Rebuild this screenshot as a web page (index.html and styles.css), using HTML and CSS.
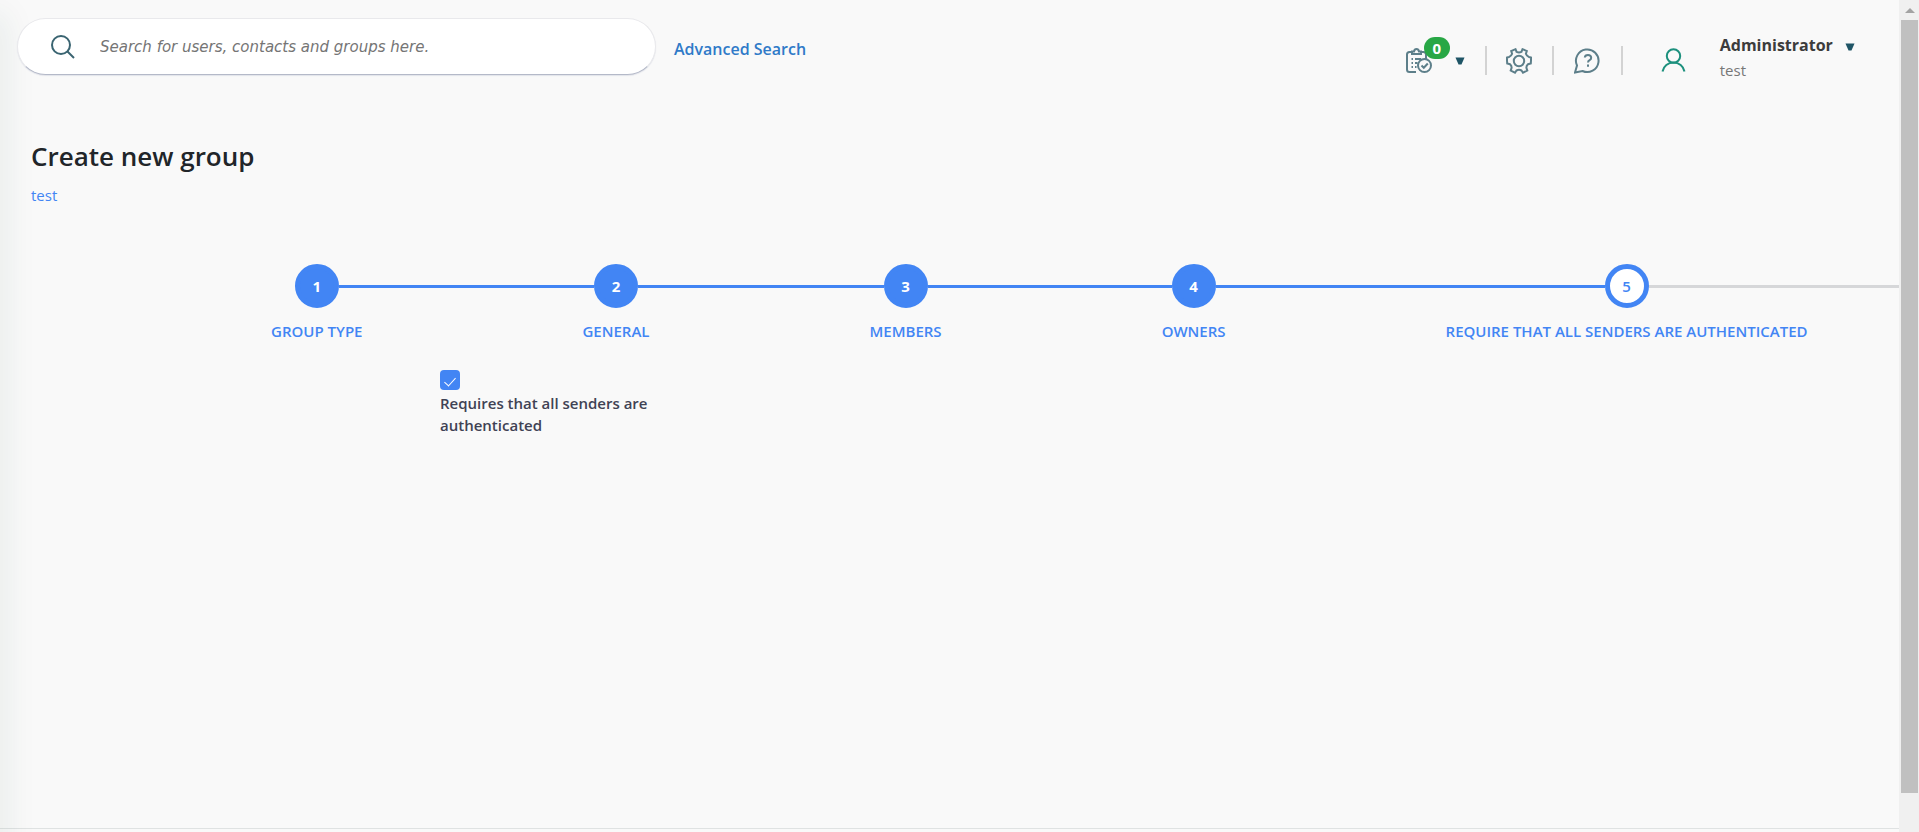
FILE: index.html
```html
<!DOCTYPE html>
<html lang="en">
<head>
<meta charset="utf-8">
<title>Create new group</title>
<link rel="stylesheet" href="styles.css">
</head>
<body>
<div class="app">
  <div class="page">
    <header class="topbar">
      <form class="search" role="search">
        <svg class="search-icon" viewBox="0 0 24 24" aria-hidden="true"><circle cx="10" cy="10" r="9"/><path d="M16.500 16.500L23 23"/></svg>
        <input class="search-input" type="search" aria-label="Search" placeholder="Search for users, contacts and groups here.">
      </form>
      <a class="advanced" href="#">Advanced Search</a>
      <div class="tools">
        <button class="tool tasks" type="button" aria-label="Tasks">
          <svg class="icon" viewBox="0 0 26 26" aria-hidden="true">
            <path d="M10 24H3.500Q1 24 1 21.500V6.500Q1 4 3.500 4H6V6H15V4H17.500Q20 4 20 6.500V11M6 5V3.500H8Q8.500 1 10.500 1T13 3.500H15V5"/>
            <path d="M5.500 11H7M9 11H15M5.500 15H7M9 15H11.500M5.500 19H7M9 19H10.500"/>
            <circle cx="18.500" cy="17.500" r="6.500"/><path d="M15.500 17.500L17.800 19.800L21.800 15.500"/>
          </svg>
          <span class="badge">0</span>
          <svg class="caret" viewBox="0 0 10 8" aria-hidden="true"><path d="M0.500 0.500H9.500L6.500 7.500H3.500Z"/></svg>
        </button>
        <button class="tool settings" type="button" aria-label="Settings">
          <svg class="icon" viewBox="0 0 26 26" aria-hidden="true">
            <path d="M9.500 1.200L10.600 3.900Q13 5 15.400 3.900L16.500 1.200L20.800 3L19.900 5.800Q20.600 8.200 23 9L25 9.500V12.500L24.800 15.500L22 16.200Q20.200 17.800 20.400 19.800L21.300 22.600L17 24.700L15.500 22.500Q13 21.200 10.500 22.500L9 24.700L4.700 22.600L5.600 19.800Q5.800 17.800 4 16.200L1.200 15.500L1 12.500V9.500L3 9Q5.400 8.200 6.100 5.800L5.200 3Z"/>
            <circle cx="13" cy="13" r="5.200"/>
          </svg>
        </button>
        <button class="tool help" type="button" aria-label="Help">
          <svg class="icon" viewBox="0 0 26 26" aria-hidden="true">
            <path d="M1 24.500L3 17.500A11.300 11.300 0 1 1 8.500 23Z"/>
            <path d="M10.800 9.500Q11 7 14 7T17.200 9.700Q17.200 11.300 15.600 12.100T14 14.500"/><path d="M14 16.500V18.800"/>
          </svg>
        </button>
      </div>
      <button class="account" type="button">
        <svg class="avatar" viewBox="0 0 24 24" aria-hidden="true"><circle cx="12" cy="8" r="6.700"/><path d="M1 23.500C2 18 6.500 14.500 12 14.500S22 18 23 23.500"/></svg>
        <span class="who">
          <span class="name">Administrator <svg class="caret" viewBox="0 0 10 8" aria-hidden="true"><path d="M0.500 0.500H9.500L6.500 7.500H3.500Z"/></svg></span>
          <span class="org">test</span>
        </span>
      </button>
    </header>
    <main class="content">
      <h1 class="title">Create new group</h1>
      <a class="crumb" href="#">test</a>
      <ol class="steps">
        <li class="step done"><span class="dot">1</span><span class="label">GROUP TYPE</span></li>
        <li class="step done"><span class="dot">2</span><span class="label">GENERAL</span></li>
        <li class="step done"><span class="dot">3</span><span class="label">MEMBERS</span></li>
        <li class="step done"><span class="dot">4</span><span class="label">OWNERS</span></li>
        <li class="step current"><span class="dot">5</span><span class="label">REQUIRE THAT ALL SENDERS ARE AUTHENTICATED</span></li>
      </ol>
      <div class="field">
        <input class="check" type="checkbox" id="auth" checked>
        <label class="field-label" for="auth">Requires that all senders are authenticated</label>
      </div>
    </main>
    <footer class="foot"></footer>
  </div>
  <div class="scroll" aria-hidden="true">
    <svg class="scroll-up" viewBox="0 0 10 5"><path d="M0 5L5 0L10 5Z"/></svg>
    <div class="thumb"></div>
  </div>
</div>
</body>
</html>
```

FILE: styles.css
```css
* { box-sizing: border-box; }
body {
  margin: 0;
  background: #f9f9f9;
  color: #212529;
  font: 15px/22px "Open Sans", "Noto Sans", sans-serif;
}
button { border: 0; padding: 0; background: none; font: inherit; color: inherit; cursor: pointer; }
a { text-decoration: none; }
.app { display: flex; min-height: 100vh; }
.page { position: relative; display: flex; flex-direction: column; flex: 1; min-width: 0; overflow: hidden; }
.page::before {
  content: "";
  position: absolute;
  top: 20px;
  bottom: -30px;
  left: -20px;
  width: 20px;
  box-shadow: 0 0 32px 6px rgba(30, 80, 60, 0.08);
}

.topbar { position: relative; display: flex; align-items: flex-start; padding: 18px 44px 0 17px; }
.search {
  display: flex;
  align-items: center;
  width: 639px;
  height: 57px;
  padding: 0 33px;
  border: 1px solid #e9e9ec;
  border-bottom-color: #b4b9c8;
  border-radius: 29px;
  background: #fff;
  box-shadow: 0 1px 1px #e2e4ea;
}
.search-icon { width: 24px; height: 24px; fill: none; stroke: #3a6471; stroke-width: 2; }
.search-input {
  flex: 1;
  margin-left: 25px;
  padding: 0;
  border: 0;
  outline: 0;
  background: none;
  font: italic 15px/20px Verdana, "DejaVu Sans", sans-serif;
}
.search-input::placeholder { color: #757575; opacity: 1; }
.advanced { margin: 20px auto 0 18px; color: #2f7ac8; font-size: 16px; font-weight: 600; }

.tools { display: flex; padding-top: 28px; }
.tool { position: relative; display: flex; align-items: center; height: 29px; border-right: 2px solid #d3d3d3; }
.icon { width: 26px; height: 26px; fill: none; stroke: #5d7f8a; stroke-width: 2; }
.tasks { padding-right: 20px; }
.tasks .caret { margin-left: 23px; }
.settings { padding: 0 20px 0 19px; }
.help { padding: 0 21px 0 20px; }
.badge {
  position: absolute;
  top: -9px;
  left: 18px;
  width: 26px;
  height: 22px;
  border-radius: 11px;
  background: #28a745;
  color: #fff;
  font-size: 15px;
  font-weight: 700;
  text-align: center;
}
.caret { width: 10px; height: 8px; fill: #1f5566; }
.account { display: flex; margin-left: 38px; padding-top: 16px; text-align: left; }
.avatar { width: 25px; height: 24px; margin-top: 14px; fill: none; stroke: #1c907d; stroke-width: 2; }
.who { display: flex; flex-direction: column; gap: 3px; margin-left: 34px; }
.name { color: #3c3c3c; font-size: 16px; font-weight: 700; }
.name .caret { margin-left: 8px; }
.org { color: #777; }

.content { position: relative; flex: 1; }
.title { margin: 57px 0 0 31px; font-size: 26px; line-height: 36px; font-weight: 600; }
.crumb { display: block; margin: 10px 0 0 31px; color: #4285f4; }
.steps {
  display: flex;
  margin: 58px 0 0;
  padding: 0 0 0 161px;
  list-style: none;
  overflow: hidden;
  color: #4285f4;
  font-weight: 600;
}
.step { display: grid; grid-template-columns: 1fr 44px 1fr; flex: none; align-items: center; row-gap: 12px; }
.step::before, .step::after { content: ""; grid-row: 1; height: 3px; background: #4285f4; }
.step::before { grid-column: 1; }
.step::after { grid-column: 3; }
.step:first-child::before { visibility: hidden; }
.step:last-child { flex: 1 0 auto; }
.current::after { margin-right: -20px; background: #d6d7d9; }
.dot {
  grid-area: 1 / 2;
  height: 44px;
  border: 5px solid #4285f4;
  border-radius: 50%;
  background: #fff;
  line-height: 34px;
  text-align: center;
}
.done .dot { background: #4285f4; color: #fff; font-weight: 700; }
.label { grid-area: 2 / 1 / 3 / 4; padding: 0 110px; white-space: nowrap; }
.field { display: flex; flex-direction: column; width: 240px; margin: 28px 0 0 440px; gap: 2px; }
.check {
  appearance: none;
  display: grid;
  place-items: center;
  width: 20px;
  height: 20px;
  margin: 0;
  border-radius: 4px;
  background: #4285f4;
}
.check:checked::before {
  content: "";
  width: 5px;
  height: 10px;
  border: solid #fff;
  border-width: 0 1px 1px 0;
  transform: rotate(42deg);
}
.field-label { color: #3f4254; font-weight: 600; }
.foot { height: 4px; border-top: 1px solid #dfe2e2; }

.scroll { display: flex; flex-direction: column; width: 20px; padding: 8px 1px 0 2px; background: #f0f0f0; }
.scroll-up { width: 10px; height: 5px; margin: 0 4px 7px; fill: #a3a3a3; }
.thumb { flex: 1; margin-bottom: 39px; background: #c0c0c0; }
```
